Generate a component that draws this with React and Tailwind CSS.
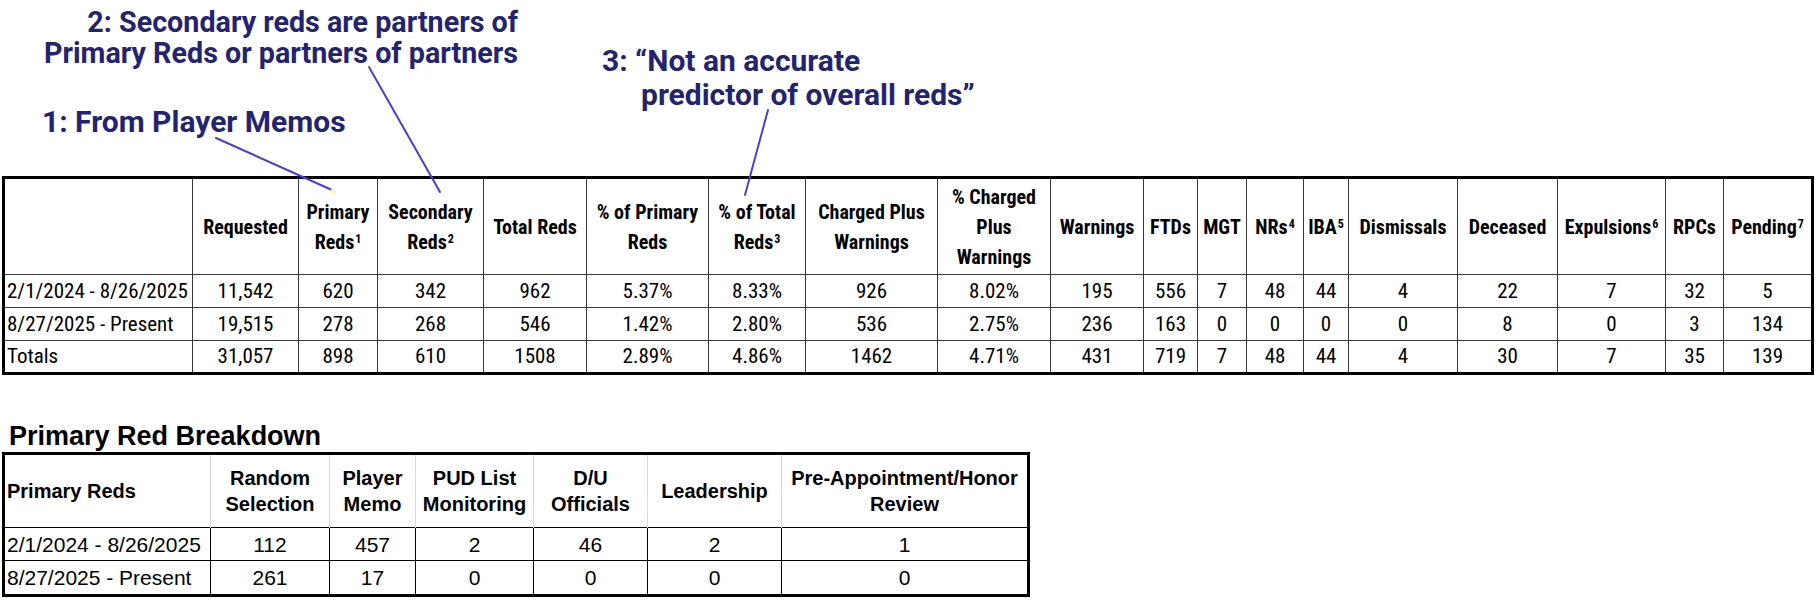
const topCols = [189, 106, 79, 106, 103, 122, 97, 132, 113, 93, 54, 49, 57, 45, 109, 100, 108, 58, 89];

const Sup = ({ n }) => <sup className="text-[12px] ml-[1px]">{n}</sup>;

const topHead = [
  '',
  'Requested',
  <>Primary<br />Reds<Sup n="1" /></>,
  <>Secondary<br />Reds<Sup n="2" /></>,
  'Total Reds',
  <>% of Primary<br />Reds</>,
  <>% of Total<br />Reds<Sup n="3" /></>,
  <>Charged Plus<br />Warnings</>,
  <>% Charged<br />Plus<br />Warnings</>,
  'Warnings',
  'FTDs',
  'MGT',
  <>NRs<Sup n="4" /></>,
  <>IBA<Sup n="5" /></>,
  'Dismissals',
  'Deceased',
  <>Expulsions<Sup n="6" /></>,
  'RPCs',
  <>Pending<Sup n="7" /></>,
];

const topRows = [
  ['2/1/2024 - 8/26/2025', '11,542', '620', '342', '962', '5.37%', '8.33%', '926', '8.02%', '195', '556', '7', '48', '44', '4', '22', '7', '32', '5'],
  ['8/27/2025 - Present', '19,515', '278', '268', '546', '1.42%', '2.80%', '536', '2.75%', '236', '163', '0', '0', '0', '0', '8', '0', '3', '134'],
  ['Totals', '31,057', '898', '610', '1508', '2.89%', '4.86%', '1462', '4.71%', '431', '719', '7', '48', '44', '4', '30', '7', '35', '139'],
];

const botCols = [207, 119, 86, 118, 114, 134, 247];

const botHead = [
  'Primary Reds',
  <>Random<br />Selection</>,
  <>Player<br />Memo</>,
  <>PUD List<br />Monitoring</>,
  <>D/U<br />Officials</>,
  'Leadership',
  <>Pre-Appointment/Honor<br />Review</>,
];

const botRows = [
  ['2/1/2024 - 8/26/2025', '112', '457', '2', '46', '2', '1'],
  ['8/27/2025 - Present', '261', '17', '0', '0', '0', '0'],
];

function Callouts() {
  return (
    <div className="relative h-[176px] font-['Roboto',sans-serif] font-bold text-[#24236f]">
      <div className="absolute left-[42px] top-[106px] whitespace-nowrap text-[30px] leading-[32px]">1: From Player Memos</div>
      <div className="absolute right-[1298px] top-[7px] text-right whitespace-nowrap text-[28.7px] leading-[31px]">
        <div>2: Secondary reds are partners of</div>
        <div>Primary Reds or partners of partners</div>
      </div>
      <div className="absolute left-[602px] top-[44px] whitespace-nowrap text-[30px] leading-[34px]">
        <div>3: “Not an accurate</div>
        <div className="pl-[39px]">predictor of overall reds”</div>
      </div>
    </div>
  );
}

function TopTable() {
  return (
    <table className="ml-[2px] table-fixed border-collapse border-[3px] border-black font-['Roboto_Condensed',sans-serif] text-black">
      <colgroup>
        {topCols.map((w, i) => (
          <col key={i} style={{ width: w }} />
        ))}
      </colgroup>
      <thead>
        <tr className="h-[97px]">
          {topHead.map((h, i) => (
            <th key={i} className="border border-[#3a3a3a] p-0 text-center align-middle text-[20px] leading-[30px] font-bold whitespace-nowrap">
              {h}
            </th>
          ))}
        </tr>
      </thead>
      <tbody>
        {topRows.map((r, ri) => (
          <tr key={ri} className="h-[33px]">
            {r.map((c, ci) => (
              <td
                key={ci}
                className={
                  'border border-[#3a3a3a] p-0 align-middle text-[21px] leading-none whitespace-nowrap ' +
                  (ci === 0 ? 'text-left pl-[2px]' : 'text-center')
                }
              >
                {c}
              </td>
            ))}
          </tr>
        ))}
      </tbody>
    </table>
  );
}

function BreakdownTable() {
  return (
    <div className="font-['Liberation_Sans',Arial,sans-serif] text-black">
      <div className="mt-[45px] pl-[9px] text-[27px] leading-[32px] font-bold">Primary Red Breakdown</div>
      <table className="ml-[2px] table-fixed border-collapse border-[3px] border-black">
        <colgroup>
          {botCols.map((w, i) => (
            <col key={i} style={{ width: w }} />
          ))}
        </colgroup>
        <thead>
          <tr className="h-[74px] border-b border-black">
            {botHead.map((h, i) => (
              <th
                key={i}
                className={
                  'border-x border-[#d9d9d9] p-0 align-middle text-[20px] leading-[26px] font-bold whitespace-nowrap ' +
                  (i === 0 ? 'text-left pl-[2px]' : 'text-center')
                }
              >
                {h}
              </th>
            ))}
          </tr>
        </thead>
        <tbody>
          {botRows.map((r, ri) => (
            <tr key={ri} className={ri === 0 ? 'h-[33px]' : 'h-[35px]'}>
              {r.map((c, ci) => (
                <td
                  key={ci}
                  className={
                    'border border-black p-0 align-middle text-[21px] leading-none whitespace-nowrap ' +
                    (ci === 0 ? 'text-left pl-[2px]' : 'text-center')
                  }
                >
                  {c}
                </td>
              ))}
            </tr>
          ))}
        </tbody>
      </table>
    </div>
  );
}

export default function App() {
  return (
    <div className="relative w-[1816px] h-[607px] overflow-hidden bg-white">
      <Callouts />
      <TopTable />
      <BreakdownTable />
      <svg className="pointer-events-none absolute left-0 top-0" width="1816" height="607">
        <g stroke="#4a3fcf" strokeWidth="2" strokeLinecap="round">
          <line x1="216" y1="138" x2="332" y2="190" />
          <line x1="369" y1="67" x2="440" y2="192" />
          <line x1="768" y1="110" x2="745" y2="195" />
        </g>
        <circle cx="333" cy="191" r="2.5" fill="#fff3a6" />
      </svg>
    </div>
  );
}
